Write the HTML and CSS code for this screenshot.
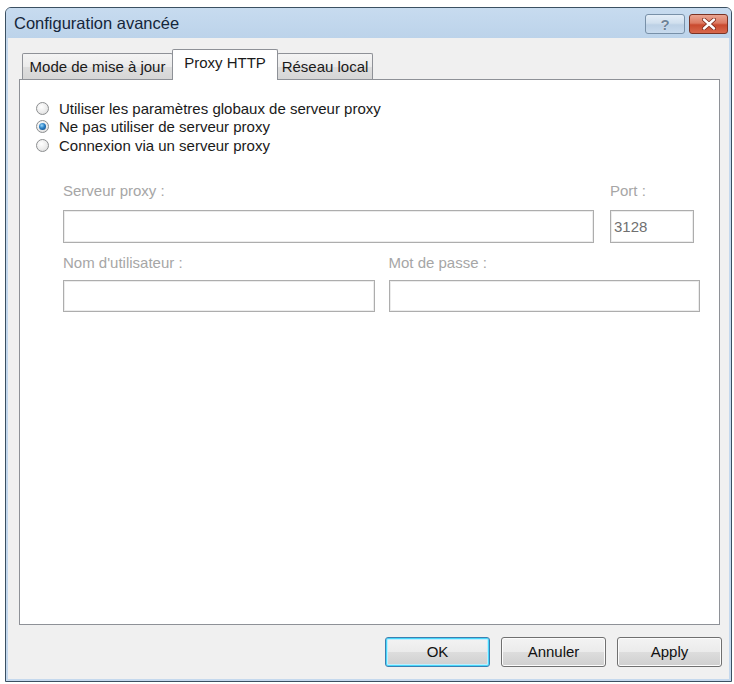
FILE: index.html
```html
<!DOCTYPE html>
<html lang="fr">
<head>
<meta charset="utf-8">
<title>Configuration avancée</title>
<link rel="stylesheet" href="styles.css">
</head>
<body>
<div class="window">
  <div class="titlebar">
    <span class="title">Configuration avancée</span>
    <div class="caption-buttons">
      <span class="cap-btn help">?</span>
      <span class="cap-btn close">
        <svg width="14" height="12" viewBox="0 0 14 12">
          <path d="M2 1.5 L12 10.5 M12 1.5 L2 10.5" stroke="#7a2a1c" stroke-width="4" stroke-linecap="round"/>
          <path d="M2 1.5 L12 10.5 M12 1.5 L2 10.5" stroke="#ffffff" stroke-width="2.4" stroke-linecap="round"/>
        </svg>
      </span>
    </div>
  </div>
  <div class="client">
    <div class="tabs">
      <div class="tab tab-update">Mode de mise à jour</div>
      <div class="tab tab-proxy selected">Proxy HTTP</div>
      <div class="tab tab-lan">Réseau local</div>
    </div>
    <div class="panel">
      <div class="radios">
        <div class="radio-row"><span class="radio"></span><span>Utiliser les paramètres globaux de serveur proxy</span></div>
        <div class="radio-row"><span class="radio checked"></span><span>Ne pas utiliser de serveur proxy</span></div>
        <div class="radio-row"><span class="radio"></span><span>Connexion via un serveur proxy</span></div>
      </div>
      <div class="fields">
        <div class="field-row row-server">
          <div class="field grow">
            <div class="label">Serveur proxy :</div>
            <div class="input"></div>
          </div>
          <div class="field port">
            <div class="label">Port :</div>
            <div class="input value">3128</div>
          </div>
        </div>
        <div class="field-row row-auth">
          <div class="field grow">
            <div class="label">Nom d'utilisateur :</div>
            <div class="input"></div>
          </div>
          <div class="field grow">
            <div class="label">Mot de passe :</div>
            <div class="input"></div>
          </div>
        </div>
      </div>
    </div>
    <div class="buttons">
      <div class="btn default">OK</div>
      <div class="btn">Annuler</div>
      <div class="btn">Apply</div>
    </div>
  </div>
</div>
</body>
</html>
```
FILE: styles.css
```css
* { box-sizing: border-box; }

body {
  margin: 0;
  background: #ffffff;
  font-family: "Liberation Sans", Arial, sans-serif;
  font-size: 15px;
  color: #1a1a1a;
}

.window {
  margin: 7px 0 0 5px;
  width: 727px;
  height: 675px;
  border: 1px solid #3b5062;
  border-radius: 6px 6px 0 0;
  background: #c4d8ed;
  display: flex;
  flex-direction: column;
  overflow: hidden;
}

.titlebar {
  height: 30px;
  flex: none;
  display: flex;
  align-items: flex-start;
  justify-content: space-between;
  padding: 0 3px 0 8px;
  background: linear-gradient(#c7dbef, #bcd3ea);
}

.title {
  font-size: 16.5px;
  line-height: 30px;
  color: #15263a;
}

.caption-buttons {
  display: flex;
  gap: 4px;
  margin-top: 6px;
}

.cap-btn {
  height: 20px;
  border-radius: 3px;
  display: flex;
  align-items: center;
  justify-content: center;
}

.help {
  width: 40px;
  border: 1px solid #7890a8;
  background: linear-gradient(#e4eef8 0%, #d0dfee 45%, #bcd0e5 55%, #c8dbee 100%);
  color: #6f8398;
  font-weight: bold;
  font-size: 15px;
  text-shadow: 0 0 1px #ffffff;
}

.close {
  width: 39px;
  border: 1px solid #7a3324;
  background: linear-gradient(#eaa592 0%, #dc7a62 45%, #c94a2f 55%, #d8684c 100%);
}

.client {
  flex: 1;
  margin: 0 2px 2px;
  background: #f0f0f0;
  padding: 11px 9px 0 11px;
  display: flex;
  flex-direction: column;
}

.tabs {
  height: 31px;
  flex: none;
  display: flex;
  align-items: flex-end;
  padding-left: 3px;
  margin-bottom: -1px;
  position: relative;
  z-index: 1;
}

.tab {
  height: 26px;
  margin-bottom: 1px;
  border: 1px solid #8e9197;
  border-bottom: none;
  border-radius: 2px 2px 0 0;
  background: linear-gradient(#f4f4f4 0%, #ebebeb 50%, #dedede 51%, #d6d6d6 100%);
  text-align: center;
  line-height: 25px;
  color: #1a1a1a;
}

.tab-update { width: 151px; }
.tab-proxy { width: 106px; margin-left: -1px; }
.tab-lan { width: 96px; margin-left: -1px; }

.tab.selected {
  height: 31px;
  margin-bottom: 0;
  background: #ffffff;
  line-height: 26px;
  position: relative;
  z-index: 2;
}

.panel {
  flex: 1;
  background: #ffffff;
  border: 1px solid #8e9197;
  padding: 19px 19px 0 16px;
}

.radios {
  display: flex;
  flex-direction: column;
}

.radio-row {
  height: 18.5px;
  display: flex;
  align-items: center;
  gap: 10px;
}

.radio {
  width: 13px;
  height: 13px;
  border-radius: 50%;
  border: 1px solid #8c8e90;
  background: radial-gradient(circle at 40% 35%, #ffffff 0%, #ececec 55%, #d4d4d4 100%);
  display: flex;
  align-items: center;
  justify-content: center;
}

.radio.checked::after {
  content: "";
  width: 7px;
  height: 7px;
  border-radius: 50%;
  background: radial-gradient(circle at 40% 35%, #9ad8fb 0%, #2a7fc4 45%, #0f3f74 100%);
}

.fields {
  margin: 27px 0 0 27px;
}

.field-row {
  display: flex;
}

.row-server { gap: 16px; padding-right: 6px; }
.row-auth { gap: 14px; margin-top: 11px; }

.field { display: flex; flex-direction: column; }
.field.grow { flex: 1; }
.field.port { width: 84px; }

.label {
  height: 18px;
  line-height: 18px;
  color: #a6a6a6;
}

.row-server .label { margin-bottom: 10px; }
.row-auth .label { margin-bottom: 8px; }

.input {
  height: 33px;
  border: 1px solid #adadad;
  box-shadow: inset 0 0 0 1px #ececec;
  background: #ffffff;
  padding: 0 3px;
  line-height: 31px;
  color: #707070;
}

.row-auth .input { height: 32px; }

.buttons {
  height: 54px;
  flex: none;
  display: flex;
  justify-content: flex-end;
  align-items: center;
  gap: 11px;
  margin-right: -2px;
}

.btn {
  width: 105px;
  height: 30px;
  border: 1px solid #707070;
  border-radius: 3px;
  background: linear-gradient(#f3f3f3 0%, #ebebeb 49%, #dddddd 50%, #cfcfcf 100%);
  box-shadow: inset 0 0 0 1px #fcfcfc;
  text-align: center;
  line-height: 28px;
  color: #111111;
}

.btn.default {
  border-color: #3c7fb1;
  box-shadow: inset 0 0 0 1px #48d8fb, inset 0 0 0 2px #bfeeff;
}
```
